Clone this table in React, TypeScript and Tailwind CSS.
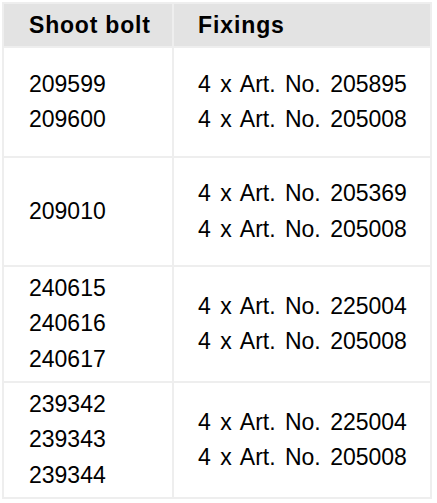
import React from "react";

const rows = [
  { bolts: ["209599", "209600"], fix: ["4 x Art. No. 205895", "4 x Art. No. 205008"], h: "h-[108px]" },
  { bolts: ["209010"], fix: ["4 x Art. No. 205369", "4 x Art. No. 205008"], h: "h-[107px]" },
  { bolts: ["240615", "240616", "240617"], fix: ["4 x Art. No. 225004", "4 x Art. No. 205008"], h: "h-[114px]" },
  { bolts: ["239342", "239343", "239344"], fix: ["4 x Art. No. 225004", "4 x Art. No. 205008"], h: "h-[114px]" },
];

export default function App() {
  return (
    <div className="w-[437px] h-[503px] bg-white pt-[2px] pl-[2px]" style={{ fontFamily: '"Liberation Sans", Arial, sans-serif' }}>
      <div className="w-[430px] grid grid-cols-[168px_256px] gap-[2px] bg-[#eeeeee] p-[2px] text-black">
        <div className="h-[42px] bg-[#e3e3e3] pl-[25px] flex items-center text-[23px] font-bold leading-none tracking-[0.8px]">Shoot bolt</div>
        <div className="h-[42px] bg-[#e3e3e3] pl-[24px] flex items-center text-[23px] font-bold leading-none tracking-[0.9px]">Fixings</div>
        {rows.map((r, i) => (
          <React.Fragment key={i}>
            <div className={`${r.h} bg-white pl-[25px] flex flex-col justify-center text-[23px] leading-[35.5px]`}>
              {r.bolts.map((b) => (
                <div key={b}>{b}</div>
              ))}
            </div>
            <div className={`${r.h} bg-white pl-[24px] flex flex-col justify-center text-[23px] leading-[35.5px] [word-spacing:3px]`}>
              {r.fix.map((f, j) => (
                <div key={j}>{f}</div>
              ))}
            </div>
          </React.Fragment>
        ))}
      </div>
    </div>
  );
}
